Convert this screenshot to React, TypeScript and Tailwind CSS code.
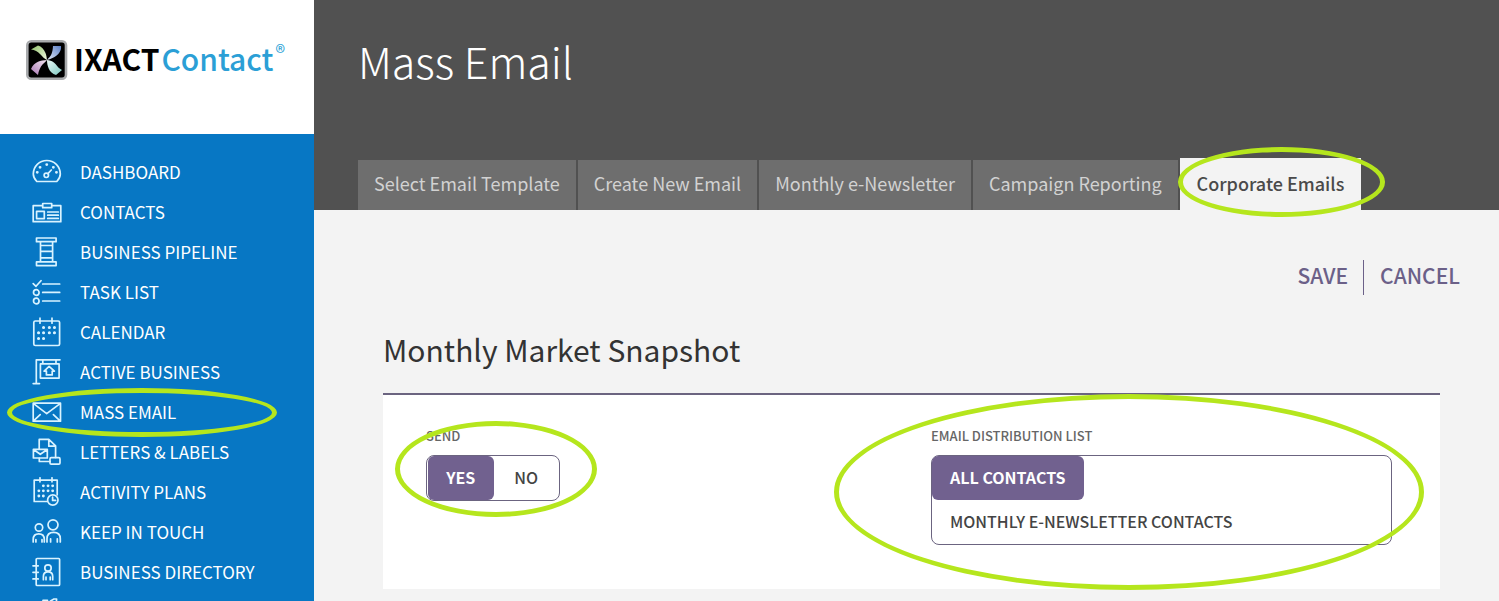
import { useState } from "react";
import type { ReactNode } from "react";
import clsx from "clsx";

const icons: Record<string, ReactNode> = {
  dashboard: (
    <>
      <path d="M4.8 24.5C2.2 21.8 1.3 19.6 1.3 17a13.5 13.5 0 0 1 27 0c0 2.6-.9 4.8-3.5 7.5z" />
      <circle cx="14.3" cy="18.3" r="2.2" />
      <path d="M15.9 16.6 19.3 13" />
      <path d="M5.2 15.3h.1M8 10.3h.1M14.7 7.6h.1M21.3 10.3h.1M24.4 15.3h.1" strokeWidth="2.8" />
    </>
  ),
  contacts: (
    <>
      <path d="M10.7 8.7H1.2v16h27.6v-16h-9.1M10.7 6.5h9v4.2h-9z" />
      <path d="M4.6 14.3h7.7v7.3H4.6zM15.7 15h10.6M15.7 18.2h10.6M15.7 21.4h10.6" />
    </>
  ),
  pipeline: (
    <path d="M4.5 1h19.6v3.7H4.5zM4.5 24.9h19.6v3.7H4.5zM8.5 4.7v20.2M20.6 4.7v20.2M8.5 8.5h12.1M8.5 14.3h12.1M8.5 20.8h12.1" />
  ),
  tasks: (
    <>
      <path d="M1.2 6.6 4 9.3l5-5.6M10.7 7h17M10.7 15.4h17M10.7 24h17" />
      <circle cx="4.3" cy="15.5" r="2.8" />
      <circle cx="4.3" cy="24" r="2.8" />
    </>
  ),
  calendar: (
    <>
      <rect x="1.8" y="4" width="25.8" height="24.5" rx="1.5" />
      <path d="M8 1.2v5M20 1.2v5" />
      <path
        d="M11.5 10.4h.1M17.3 10.4h.1M22.4 10.4h.1M6.5 15.8h.1M11.5 15.8h.1M17.3 15.8h.1M22.4 15.8h.1M6.5 21.6h.1M11.5 21.6h.1"
        strokeWidth="3"
      />
    </>
  ),
  sign: (
    <>
      <path d="M28 2.8H4.3v23.6M1.2 26.6h6.3M10.8 2.8v4M24 2.8v4M8.4 6.9h18.7v14.2H8.4z" />
      <path d="m17.1 9.4-5 4.7h2.3v3.8h5.8v-3.8h2.2z" />
    </>
  ),
  mail: (
    <path d="M1.2 6.2h27.3v18H1.2zM1.6 6.6l13.1 10 13.4-10M2.6 22.9l5.6-5.3M27 22.9l-5.6-5.3" />
  ),
  letters: (
    <>
      <path d="M7.2 12V2.4h9.6l6.8 6.5v11.6M16.8 2.4v6.8h6.6M7.3 21.3v3.2H18" />
      <path d="M1.4 12.3h13.9V21H1.4zM1.8 12.7l6.5 4.6 6.6-4.6" />
      <rect x="18" y="20.7" width="10" height="6.5" rx="1.2" />
    </>
  ),
  plans: (
    <>
      <path d="M15.2 24.5H2.2V3.2h23v14.6M8 .8v4M20 .8v4" />
      <circle cx="20.8" cy="23" r="5.2" />
      <path d="M20.6 20v3.4h3" />
      <path
        d="M11.3 8.8h.1M16 8.8h.1M20.6 8.8h.1M6.8 13.8h.1M11.3 13.8h.1M16 13.8h.1M20.6 13.8h.1M6.8 19h.1M11.3 19h.1"
        strokeWidth="2.8"
      />
    </>
  ),
  people: (
    <>
      <circle cx="7" cy="10.5" r="3.7" />
      <circle cx="21" cy="7.8" r="5" />
      <path d="M1.2 25v-2.6c0-3.6 2-5.6 5.6-5.6s5.5 2 5.5 5.6V25M3.9 25v-2.5M10 25v-2.5M15 25v-3.2c0-4.4 2.2-6.4 6.6-6.4s6.7 2 6.7 6.4V25M18.6 25v-3.2M25.3 25v-3.2" />
    </>
  ),
  directory: (
    <>
      <rect x="4.2" y="1.5" width="23.4" height="27" rx="1" />
      <path d="M1 8.8h5.2M1 15.3h5.2M1 21.9h5.2" />
      <circle cx="16" cy="11" r="3.2" />
      <path d="M11.4 22.7v-3.4c0-2.8 1.6-4.4 4.6-4.4s4.7 1.6 4.7 4.4v3.4M14 22.7v-2.6M18.2 22.7v-2.6" />
    </>
  ),
  tools: <path d="M11 3.4h4.5M18.5 4 22 2h2.6l-.4 5-8.7 9M11 3.4v24h14V14" />,
};

const navItems = [
  { icon: "dashboard", label: "DASHBOARD" },
  { icon: "contacts", label: "CONTACTS" },
  { icon: "pipeline", label: "BUSINESS PIPELINE" },
  { icon: "tasks", label: "TASK LIST" },
  { icon: "calendar", label: "CALENDAR" },
  { icon: "sign", label: "ACTIVE BUSINESS" },
  { icon: "mail", label: "MASS EMAIL", marked: true },
  { icon: "letters", label: "LETTERS & LABELS" },
  { icon: "plans", label: "ACTIVITY PLANS" },
  { icon: "people", label: "KEEP IN TOUCH" },
  { icon: "directory", label: "BUSINESS DIRECTORY" },
  { icon: "tools", label: "" },
];

const tabs = [
  "Select Email Template",
  "Create New Email",
  "Monthly e-Newsletter",
  "Campaign Reporting",
  "Corporate Emails",
];

// Green ring drawn over the thing being pointed out
function Highlight({ className }: { className: string }) {
  return (
    <span
      aria-hidden="true"
      className={clsx(
        "pointer-events-none absolute z-10 rounded-[50%] border-5 border-[#b5e61d]",
        className,
      )}
    />
  );
}

function Logo() {
  return (
    <a href="#" aria-label="IXACT Contact" className="flex items-center gap-[6px]">
      <svg viewBox="0 0 42 40" className="h-10 w-[42px]" aria-hidden="true">
        <defs>
          <linearGradient id="leaf" x1="0" y1="0" x2="1" y2="1">
            <stop offset="0" stopColor="#8fc06a" />
            <stop offset="1" stopColor="#f1f8e2" />
          </linearGradient>
          <linearGradient id="sky" x1="1" y1="0" x2="0" y2="1">
            <stop offset="0" stopColor="#5b7fc4" />
            <stop offset="1" stopColor="#e4ebf8" />
          </linearGradient>
          <linearGradient id="plum" x1="0" y1="1" x2="1" y2="0">
            <stop offset="0" stopColor="#a878b4" />
            <stop offset="1" stopColor="#f6e8f3" />
          </linearGradient>
          <linearGradient id="mint" x1="1" y1="1" x2="0" y2="0">
            <stop offset="0" stopColor="#7cc8c0" />
            <stop offset="1" stopColor="#edfaf7" />
          </linearGradient>
        </defs>
        <rect x="1.3" y="1.3" width="38.7" height="37.4" rx="4" fill="#000" stroke="#a9abad" strokeWidth="2.6" />
        <path d="M5 9.500 12 5.500c3.500 1 6 4 7.500 7.500.8 2 1.200 4.500 1.500 7-3-1.500-4.500-3.500-7-6-2.500-2.600-5-4-9-4.500z" fill="url(#leaf)" />
        <path d="M27 6h8c.5 4-1.500 7.500-5 10-2.500 1.800-5.500 3-9 4 1.500-2 3.500-3.500 4.500-6s1.300-5 1.500-8z" fill="url(#sky)" />
        <path d="M5 29c1.500-3.500 4-6 7-7.200 2.600-1 5.500-1.600 9-1.800-2 2.500-4.500 4-6 6.500s-2.500 5-3 8.500z" fill="url(#plum)" />
        <path d="M21 20c4 .5 6.500 1.500 8.500 4s3.500 4.500 6.500 6l-6 5c-3.500-1-6-3.500-7.300-6.500-1.100-2.600-1.700-5.500-1.700-8.500z" fill="url(#mint)" />
      </svg>
      <span className="flex items-start gap-[2px] pb-[5px] text-[30px] leading-9">
        <span className="font-bold text-black">IXACT</span>
        <span className="font-medium text-[#2b9fd6]">Contact</span>
        <span className="text-xl leading-6 text-[#2b9fd6]">®</span>
      </span>
    </a>
  );
}

function Sidebar() {
  return (
    <aside className="flex w-[314px] shrink-0 flex-col bg-[#0777c4]">
      <div className="flex h-[134px] shrink-0 items-center bg-white px-[26px] pb-[14px]">
        <Logo />
      </div>
      <nav className="pt-[18px]">
        <ul>
          {navItems.map((item) => (
            <li key={item.icon} className="relative">
              <a
                href="#"
                aria-label={item.label || "Tools"}
                className="flex h-10 items-center gap-[18px] px-8 text-[17px] text-white"
              >
                <svg
                  viewBox="0 0 30 30"
                  className="size-[30px] shrink-0"
                  fill="none"
                  stroke="#d9f3ff"
                  strokeWidth="1.7"
                  strokeLinecap="round"
                  strokeLinejoin="round"
                  aria-hidden="true"
                >
                  {icons[item.icon]}
                </svg>
                {item.label}
              </a>
              {item.marked && <Highlight className="-top-1 left-[7px] h-[49px] w-[270px]" />}
            </li>
          ))}
        </ul>
      </nav>
    </aside>
  );
}

function PageHeader() {
  const [active, setActive] = useState("Corporate Emails");

  return (
    <header className="flex h-[210px] shrink-0 flex-col justify-between bg-[#515151] pl-11">
      <h1 className="pt-[30px] text-[43px] leading-[60px] font-light text-white">Mass Email</h1>
      <div role="tablist" className="flex items-end gap-[2px]">
        {tabs.map((tab) => (
          <div key={tab} className="relative">
            <button
              type="button"
              role="tab"
              aria-selected={tab === active}
              onClick={() => setActive(tab)}
              className={clsx(
                "block text-lg whitespace-nowrap",
                tab === active
                  ? "h-[52px] bg-[#f3f3f3] px-[17px] pb-[2px] font-medium text-[#4a4a4a]"
                  : "h-[50px] bg-[#6e6e6e] px-4 pb-1 text-[#d2d2d2]",
              )}
            >
              {tab}
            </button>
            {tab === "Corporate Emails" && (
              <Highlight className="-top-[11px] -right-6 -bottom-[7px] -left-[2px]" />
            )}
          </div>
        ))}
      </div>
    </header>
  );
}

function Choice({
  label,
  selected,
  onSelect,
  className,
}: {
  label: string;
  selected: boolean;
  onSelect: () => void;
  className: string;
}) {
  return (
    <button
      type="button"
      aria-pressed={selected}
      onClick={onSelect}
      className={clsx(
        "h-11 rounded-md pb-[3px] text-base whitespace-nowrap",
        selected ? "bg-[#71618f] font-bold text-white" : "font-medium text-[#444]",
        className,
      )}
    >
      {label}
    </button>
  );
}

function SnapshotCard() {
  const [send, setSend] = useState("YES");
  const [list, setList] = useState("ALL CONTACTS");

  return (
    <section className="grid grid-cols-2 gap-11 border-t-2 border-[#6b6480] bg-white pt-[31px] pr-12 pb-11 pl-[43px]">
      <div className="relative">
        <h3 id="send-label" className="text-[13px] leading-5 font-medium text-[#666]">
          SEND
        </h3>
        <div
          role="group"
          aria-labelledby="send-label"
          className="mt-[9px] flex w-[134px] rounded-lg border border-[#6b6480] pl-px"
        >
          {["YES", "NO"].map((v) => (
            <Choice
              key={v}
              label={v}
              selected={send === v}
              onSelect={() => setSend(v)}
              className="flex-1"
            />
          ))}
        </div>
        <Highlight className="-top-[5px] -left-[31px] h-24 w-[202px]" />
      </div>
      <div className="relative">
        <h3 id="list-label" className="text-[13px] leading-5 font-medium text-[#666]">
          EMAIL DISTRIBUTION LIST
        </h3>
        <div
          role="group"
          aria-labelledby="list-label"
          className="mt-[9px] flex flex-col items-start rounded-lg border border-[#6b6480]"
        >
          {["ALL CONTACTS", "MONTHLY E-NEWSLETTER CONTACTS"].map((v) => (
            <Choice
              key={v}
              label={v}
              selected={list === v}
              onSelect={() => setList(v)}
              className="px-[18px]"
            />
          ))}
        </div>
        <Highlight className="-top-8 -right-8 -bottom-[45px] -left-[97px]" />
      </div>
    </section>
  );
}

export default function App() {
  return (
    <div className="flex h-screen overflow-hidden bg-[#f3f3f3] font-['Noto_Sans_CJK_SC','Noto_Sans',sans-serif]">
      <Sidebar />
      <div className="flex min-w-0 flex-1 flex-col">
        <PageHeader />
        <main className="pr-[59px] pl-[69px]">
          <div className="-mr-5 flex justify-end pt-[50px] text-[21px] font-medium text-[#6b6088]">
            <button type="button" className="h-[35px] border-r border-[#6b6088] pr-[15px] pb-1">
              SAVE
            </button>
            <button type="button" className="h-[35px] pb-1 pl-4">
              CANCEL
            </button>
          </div>
          <h2 className="pt-[30px] pb-5 text-[30px] leading-[48px] text-[#333]">
            Monthly Market Snapshot
          </h2>
          <SnapshotCard />
        </main>
      </div>
    </div>
  );
}
